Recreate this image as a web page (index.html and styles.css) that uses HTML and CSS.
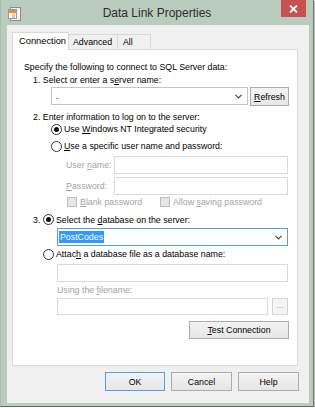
FILE: index.html
```html
<!DOCTYPE html>
<html>
<head>
<meta charset="utf-8">
<link rel="stylesheet" href="styles.css">
</head>
<body>
<div class="window">
  <div class="titlebar">
    <svg class="app-icon" width="13" height="14" viewBox="0 0 13 14">
      <rect x="2.5" y="0.5" width="10" height="13" fill="#f4f4f4" stroke="#8a8a8a"/>
      <rect x="0.5" y="2.5" width="8" height="9" fill="#fafafa" stroke="#9a9a9a"/>
      <rect x="1" y="3" width="7" height="3" fill="#f08a2c"/>
      <line x1="4" y1="8" x2="7" y2="8" stroke="#9a9a9a"/>
      <line x1="4" y1="10" x2="7" y2="10" stroke="#9a9a9a"/>
    </svg>
    <div class="title">Data Link Properties</div>
    <div class="close">
      <svg width="9" height="8" viewBox="0 0 9 8"><path d="M1 0.5 L8 7.5 M8 0.5 L1 7.5" stroke="#fff" stroke-width="1.8"/></svg>
    </div>
  </div>
  <div class="client">
    <div class="tabs">
      <div class="tab tab-active">Connection</div>
      <div class="tab tab-adv">Advanced</div>
      <div class="tab tab-all">All</div>
    </div>
    <div class="panel">
      <div class="row row-a"><span>Specify the following to connect to SQL Server data:</span></div>
      <div class="row row-b"><span>1. Select or enter a s<u>e</u>rver name:</span></div>
      <div class="row row-c">
        <div class="combo">
          <span class="combo-text">.</span>
          <svg class="chev" width="7" height="5" viewBox="0 0 7 5"><path d="M0.5 0.8 L3.5 3.8 L6.5 0.8" fill="none" stroke="#444" stroke-width="1.2"/></svg>
        </div>
        <div class="btn btn-refresh"><span><u>R</u>efresh</span></div>
      </div>
      <div class="row row-d"><span>2. Enter information to log on to the server:</span></div>
      <div class="row row-e">
        <span class="radio checked"></span><span>Use <u>W</u>indows NT Integrated security</span>
      </div>
      <div class="row row-f">
        <span class="radio"></span><span><u>U</u>se a specific user name and password:</span>
      </div>
      <div class="row row-g">
        <span class="lbl disabled">User <u>n</u>ame:</span><span class="input w-cred"></span>
      </div>
      <div class="row row-h">
        <span class="lbl disabled"><u>P</u>assword:</span><span class="input w-cred"></span>
      </div>
      <div class="row row-i">
        <span class="check-item first"><span class="check"></span><span class="disabled"><u>B</u>lank password</span></span>
        <span class="check-item"><span class="check"></span><span class="disabled">Allow <u>s</u>aving password</span></span>
      </div>
      <div class="row row-j">
        <span class="num">3.</span><span class="radio checked"></span><span>Select the <u>d</u>atabase on the server:</span>
      </div>
      <div class="row row-k">
        <div class="combo focused wide">
          <span class="sel-text">PostCodes</span>
          <svg class="chev" width="7" height="5" viewBox="0 0 7 5"><path d="M0.5 0.8 L3.5 3.8 L6.5 0.8" fill="none" stroke="#444" stroke-width="1.2"/></svg>
        </div>
      </div>
      <div class="row row-l">
        <span class="radio"></span><span>Attac<u>h</u> a database file as a database name:</span>
      </div>
      <div class="row row-m"><span class="input wide"></span></div>
      <div class="row row-n"><span class="disabled">Using the <u>f</u>ilename:</span></div>
      <div class="row row-o">
        <span class="input w-file"></span>
        <span class="btn btn-dots disabled">...</span>
      </div>
      <div class="row row-p">
        <div class="btn btn-test"><span><u>T</u>est Connection</span></div>
      </div>
    </div>
    <div class="buttons">
      <div class="btn btn-main btn-default">OK</div>
      <div class="btn btn-main">Cancel</div>
      <div class="btn btn-main">Help</div>
    </div>
  </div>
</div>
</body>
</html>
```

FILE: styles.css
```css
body {
  margin: 0;
  background: #ffffff;
  font-family: "Liberation Sans", Arial, sans-serif;
  font-size: 8.8px;
  color: #000;
}

.window {
  width: 314px;
  height: 407px;
  box-sizing: border-box;
  background: #b9ccbe;
  border-left: 1px solid #a9bcae;
  border-right: 1px solid #6f7c72;
  border-bottom: 1px solid #5f6a62;
  box-shadow: 1px 1px 0 rgba(0, 0, 0, 0.25);
}

.titlebar {
  height: 25px;
  display: grid;
  grid-template-columns: 1fr auto 1fr;
  align-items: start;
}

.app-icon {
  margin: 7px 0 0 7px;
  display: block;
}

.title {
  font-size: 12px;
  line-height: 26px;
  color: #2d2d2d;
}

.close {
  justify-self: end;
  width: 25px;
  height: 17px;
  margin-right: 7px;
  background: #c75050;
  display: flex;
  align-items: center;
  justify-content: center;
}

.client {
  width: 302px;
  height: 378px;
  margin-left: 6px;
  box-sizing: border-box;
  background: #f0f0f0;
  padding: 7px 0 0 5px;
}

.tabs {
  display: flex;
  align-items: flex-end;
  height: 17px;
}

.tab {
  box-sizing: border-box;
  height: 15px;
  border: 1px solid #d9d9d9;
  border-bottom: none;
  background: #f0f0f0;
  line-height: 14px;
  padding-left: 5px;
}

.tab-active {
  position: relative;
  z-index: 1;
  width: 57px;
  height: 18px;
  margin-bottom: -1px;
  background: #fff;
  padding-left: 6px;
  line-height: 17px;
  font-size: 9.3px;
}

.tab-adv {
  width: 49px;
  border-left: none;
  padding-left: 4px;
}

.tab-all {
  width: 33px;
  border-left: none;
}

.panel {
  box-sizing: border-box;
  width: 286px;
  height: 317px;
  border: 1px solid #d9d9d9;
  background: #fff;
}

.row {
  display: flex;
  align-items: center;
  line-height: 12px;
  white-space: nowrap;
}

.row-a { margin: 11px 0 0 11px; height: 12px; }
.row-b { margin: 1px 0 0 20px; height: 12px; }
.row-c { margin: 1px 0 0 38px; height: 19px; align-items: flex-start; }
.row-d { margin: 5px 0 0 20px; height: 12px; }
.row-e { margin: 0 0 0 38px; height: 12px; }
.row-f { margin: 5px 0 0 38px; height: 12px; }
.row-g { margin: 4px 0 0 53px; height: 18px; }
.row-h { margin: 3px 0 0 53px; height: 18px; }
.row-i { margin: 1px 0 0 54px; height: 12px; }
.row-j { margin: 5px 0 0 20px; height: 13px; }
.row-k { margin: 2px 0 0 44px; height: 18px; }
.row-l { margin: 2px 0 0 30px; height: 12px; }
.row-m { margin: 4px 0 0 44px; height: 18px; }
.row-n { margin: 2px 0 0 44px; height: 12px; }
.row-o { margin: 2px 0 0 44px; height: 17px; }
.row-p { margin: 6px 0 0 176px; height: 18px; }

.disabled { color: #a3a3a3; }

.combo {
  box-sizing: border-box;
  width: 197px;
  height: 18px;
  border: 1px solid #c5c5c5;
  background: #fff;
  display: flex;
  align-items: center;
  justify-content: space-between;
  padding: 0 5px 0 4px;
}

.combo.wide { width: 231px; }

.combo.focused { border-color: #569de5; padding-left: 1px; }

.sel-text {
  background: #3399ff;
  color: #fff;
  padding: 0 1px;
  line-height: 12px;
}

.btn {
  box-sizing: border-box;
  border: 1px solid #acacac;
  background: linear-gradient(#f3f3f3, #e6e6e6);
  display: flex;
  align-items: center;
  justify-content: center;
  line-height: 12px;
}

.btn-refresh {
  width: 39px;
  height: 19px;
  margin-left: 2px;
}

.radio {
  box-sizing: border-box;
  width: 11px;
  height: 11px;
  border: 1px solid #333;
  border-radius: 50%;
  background: #fff;
  margin-right: 2px;
  display: flex;
  align-items: center;
  justify-content: center;
  flex: none;
}

.radio.checked::after {
  content: "";
  width: 5px;
  height: 5px;
  border-radius: 50%;
  background: #111;
}

.lbl { width: 48px; }

.input {
  box-sizing: border-box;
  height: 18px;
  border: 1px solid #d9d9d9;
  background: #fff;
  display: block;
}

.w-cred { width: 174px; }
.input.wide { width: 231px; }
.w-file { width: 211px; height: 17px; }

.check-item {
  display: flex;
  align-items: center;
}

.check-item.first { width: 93px; }

.check {
  box-sizing: border-box;
  width: 10px;
  height: 10px;
  border: 1px solid #bcbcbc;
  background: #e6e6e6;
  margin-right: 3px;
}

.num { width: 10px; }

.btn-dots {
  width: 16px;
  height: 17px;
  margin-left: 4px;
  border-color: #d5d5d5;
  background: #f4f4f4;
  align-items: flex-end;
  padding-bottom: 3px;
}

.btn-test {
  width: 100px;
  height: 18px;
}

.buttons {
  width: 287px;
  margin-top: 6px;
  display: flex;
  justify-content: flex-end;
  gap: 6px;
}

.btn-main {
  width: 61px;
  height: 19px;
}

.btn-default {
  border-color: #569de5;
  width: 60px;
}
```
